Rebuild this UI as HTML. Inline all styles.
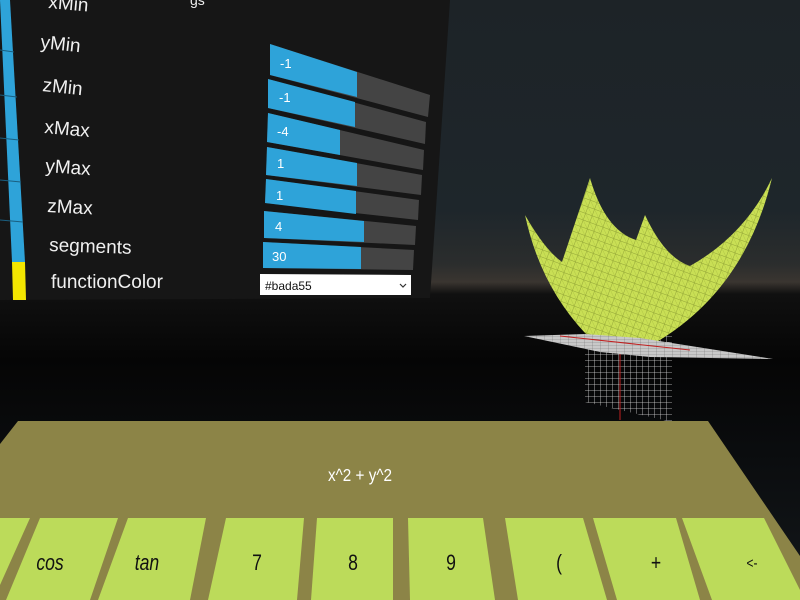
<!DOCTYPE html>
<html><head><style>
html,body{margin:0;padding:0;width:800px;height:600px;overflow:hidden;background:#000}
svg{display:block}
text{font-family:"Liberation Sans",sans-serif}
</style></head><body>
<svg width="800" height="600" viewBox="0 0 800 600" xmlns="http://www.w3.org/2000/svg">
<defs>
<linearGradient id="sky" x1="0" y1="0" x2="0" y2="1">
<stop offset="0" stop-color="#1d2327"/>
<stop offset="0.35" stop-color="#1e262b"/>
<stop offset="0.44" stop-color="#2b2d2d"/>
<stop offset="0.47" stop-color="#3a3530"/>
<stop offset="0.49" stop-color="#101010"/>
<stop offset="0.6" stop-color="#050505"/>
<stop offset="0.75" stop-color="#0a0c0e"/>
<stop offset="1" stop-color="#14181b"/>
</linearGradient>
<pattern id="mesh" width="7" height="7" patternUnits="userSpaceOnUse" patternTransform="rotate(20)">
<rect width="7" height="7" fill="#c9df55"/>
<path d="M0 0H7M0 0V7" stroke="#7f8f2c" stroke-width="0.7"/>
<path d="M0 0L7 7" stroke="#a8bd40" stroke-width="0.5"/>
</pattern>
<pattern id="wg" width="6" height="6" patternUnits="userSpaceOnUse">
<path d="M0 0H6M0 0V6" stroke="#d8d8d8" stroke-width="0.8"/>
</pattern>
<pattern id="fg" width="8" height="3" patternUnits="userSpaceOnUse">
<rect width="8" height="3" fill="#c8c8c8"/>
<path d="M0 0H8M0 0V3" stroke="#777" stroke-width="0.6"/>
</pattern>
</defs>
<rect width="800" height="600" fill="url(#sky)"/>
<polygon points="0,0 450,0 430,298 0,300" fill="#161616"/>
<polygon points="0,0 10,0 25,262 12,262" fill="#2ea3d9"/>
<g stroke="#1a5f80" stroke-width="1">
<line x1="0" y1="50" x2="14" y2="52"/><line x1="0" y1="95" x2="17" y2="97"/><line x1="0" y1="138" x2="19" y2="140"/><line x1="0" y1="180" x2="21" y2="182"/><line x1="0" y1="220" x2="23" y2="222"/>
</g>
<polygon points="12,262 25,262 26,300 13,300" fill="#f3e600"/>
<g fill="#f0f0f0" font-size="19">
<text x="48" y="8" transform="rotate(5 48 8)">xMin</text>
<text x="190" y="5" font-size="14">gs</text>
<text x="40" y="48" transform="rotate(6 40 48)">yMin</text>
<text x="42" y="91" transform="rotate(6 42 91)">zMin</text>
<text x="44" y="133" transform="rotate(5 44 133)">xMax</text>
<text x="45" y="172" transform="rotate(4 45 172)">yMax</text>
<text x="47" y="212" transform="rotate(3 47 212)">zMax</text>
<text x="49" y="251" transform="rotate(2 49 251)">segments</text>
<text x="51" y="288">functionColor</text>
</g>
<g>
<polygon points="270,44 430,95 428,117 270,75" fill="#444"/>
<polygon points="270,44 357,72 357,97 270,75" fill="#2ea3d9"/>
<polygon points="268,79 426,122 425,144 268,108" fill="#444"/>
<polygon points="268,79 355,102 355,127 268,108" fill="#2ea3d9"/>
<polygon points="268,113 424,150 423,170 267,142" fill="#444"/>
<polygon points="268,113 340,130 340,155 267,142" fill="#2ea3d9"/>
<polygon points="267,147 422,175 421,195 266,175" fill="#444"/>
<polygon points="267,147 357,163 357,186 266,175" fill="#2ea3d9"/>
<polygon points="266,179 419,200 418,220 265,203" fill="#444"/>
<polygon points="266,179 356,191 356,214 265,203" fill="#2ea3d9"/>
<polygon points="264,211 416,226 415,245 264,238" fill="#444"/>
<polygon points="264,211 364,221 364,242 264,238" fill="#2ea3d9"/>
<polygon points="263,242 414,250 413,270 263,268" fill="#444"/>
<polygon points="263,242 361,247 361,269 263,268" fill="#2ea3d9"/>
</g>
<g fill="#fff" font-size="13">
<text x="280" y="68">-1</text><text x="279" y="102">-1</text><text x="277" y="136">-4</text>
<text x="277" y="168">1</text><text x="276" y="200">1</text><text x="275" y="231">4</text><text x="272" y="261">30</text>
</g>
<polygon points="260,274 411,275 411,295 260,295" fill="#fff"/>
<text x="265" y="290" font-size="12" fill="#111">#bada55</text>
<path d="M400 284l3 3 3-3" stroke="#333" fill="none" stroke-width="1.2"/>
<polygon points="585,330 672,325 672,422 585,402" fill="url(#wg)"/>
<line x1="620" y1="338" x2="620" y2="420" stroke="#c02020" stroke-width="1"/>
<path d="M525,215 Q545,250 562,262 L590,178 Q605,230 636,240 L645,215 Q665,258 690,266 Q745,235 772,178 Q745,290 655,343 Q610,352 585,333 Q540,285 525,215 Z" fill="url(#mesh)"/>
<polygon points="524,336 585,334 640,338 773,359 650,357 600,352" fill="url(#fg)"/>
<line x1="560" y1="336" x2="690" y2="350" stroke="#c02020" stroke-width="1"/>
<polygon points="18,421 708,421 800,556 800,600 0,600 0,444" fill="#8c8447"/>
<text x="360" y="481" font-size="18" fill="#fff" text-anchor="middle" transform="translate(360 0) scale(0.85 1) translate(-360 0)" >x^2 + y^2</text>
<g fill="#bcdb5a">
<polygon points="0,518 30,518 0,585"/>
<polygon points="40,518 118,518 90,600 6,600"/>
<polygon points="128,518 206,518 190,600 98,600"/>
<polygon points="226,518 304,518 297,600 208,600"/>
<polygon points="317,518 393,518 393,600 311,600"/>
<polygon points="408,518 483,518 495,600 410,600"/>
<polygon points="505,518 583,518 607,600 518,600"/>
<polygon points="593,518 676,518 700,600 617,600"/>
<polygon points="682,518 764,518 800,590 800,600 712,600"/>
</g>
<g font-size="22" fill="#111" text-anchor="middle">
<text transform="translate(50 570) scale(0.8 1)" font-style="italic">cos</text>
<text transform="translate(147 570) scale(0.8 1)" font-style="italic">tan</text>
<text transform="translate(257 570) scale(0.8 1)">7</text>
<text transform="translate(353 570) scale(0.8 1)">8</text>
<text transform="translate(451 570) scale(0.8 1)">9</text>
<text transform="translate(559 570) scale(0.8 1)">(</text>
<text transform="translate(656 570) scale(0.8 1)">+</text>
<text transform="translate(752 568) scale(0.8 1)" font-size="15">&lt;-</text>
</g>
</svg>
</body></html>
